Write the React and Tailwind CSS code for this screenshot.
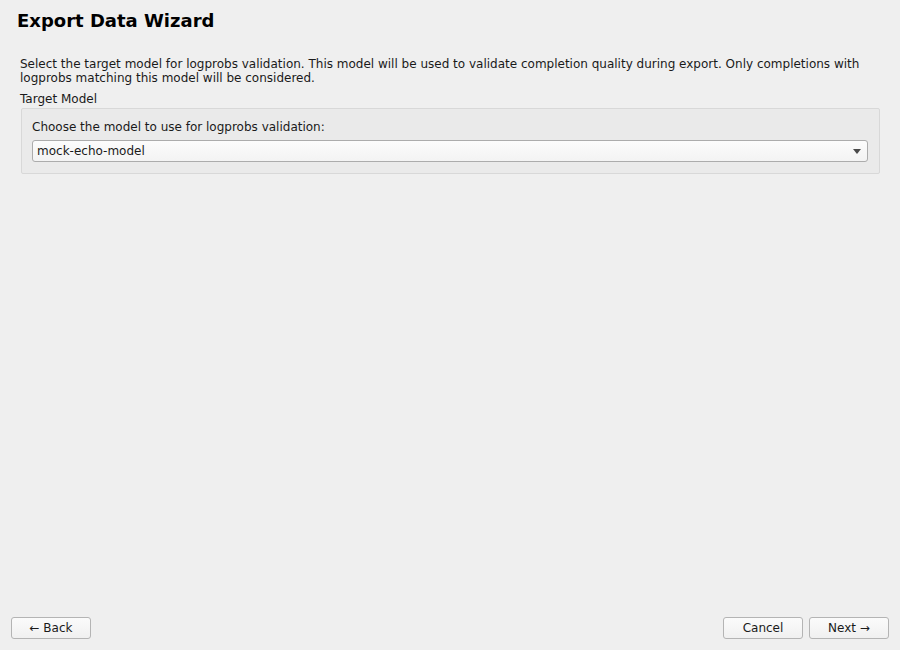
import React from 'react';

const font = { fontFamily: '"DejaVu Sans", "Liberation Sans", sans-serif' };

const Button = ({ children }) => (
  <button className="w-[80px] h-[22px] rounded-[3px] border border-[#b4b4b4] bg-gradient-to-b from-[#fbfbfb] to-[#f0f0f0] text-[12px] text-[#1a1a1a] leading-none flex items-center justify-center">
    {children}
  </button>
);

const App = () => {
  return (
    <div className="w-[900px] h-[650px] bg-[#efefef] flex flex-col text-[#1a1a1a]" style={font}>
      {/* Header */}
      <div className="pl-[17px] pt-[9px]">
        <h1 className="text-[18px] font-bold leading-[24px] text-black">Export Data Wizard</h1>
      </div>

      {/* Page body */}
      <div className="flex-1 pl-[20px] pr-[20px] pt-[24px]">
        <p className="text-[12px] leading-[14px] w-[860px]">
          Select the target model for logprobs validation. This model will be used to validate completion quality during export. Only completions with logprobs matching this model will be considered.
        </p>
        <div className="text-[12px] leading-[14px] mt-[7px]">Target Model</div>

        <div className="ml-[1px] mt-[2px] w-[859px] h-[66px] border border-[#d8d8d8] rounded-[2px] bg-[#eaeaea] px-[10px] pt-[11px]">
          <div className="text-[12px] leading-[14px]">Choose the model to use for logprobs validation:</div>
          <div className="mt-[6px] h-[22px] w-[836px] rounded-[3px] border border-[#acacac] bg-gradient-to-b from-[#fcfcfc] to-[#f3f3f3] flex items-center justify-between pl-[4px] pr-[6px]">
            <span className="text-[12px] leading-none">mock-echo-model</span>
            <svg width="8" height="5" viewBox="0 0 8 5">
              <path d="M0 0 L8 0 L4 5 Z" fill="#4a4a4a" />
            </svg>
          </div>
        </div>
      </div>

      {/* Footer buttons */}
      <div className="flex items-center justify-between pl-[11px] pr-[11px] pb-[11px]">
        <Button>← Back</Button>
        <div className="flex gap-[6px]">
          <Button>Cancel</Button>
          <Button>Next →</Button>
        </div>
      </div>
    </div>
  );
};

export default App;
